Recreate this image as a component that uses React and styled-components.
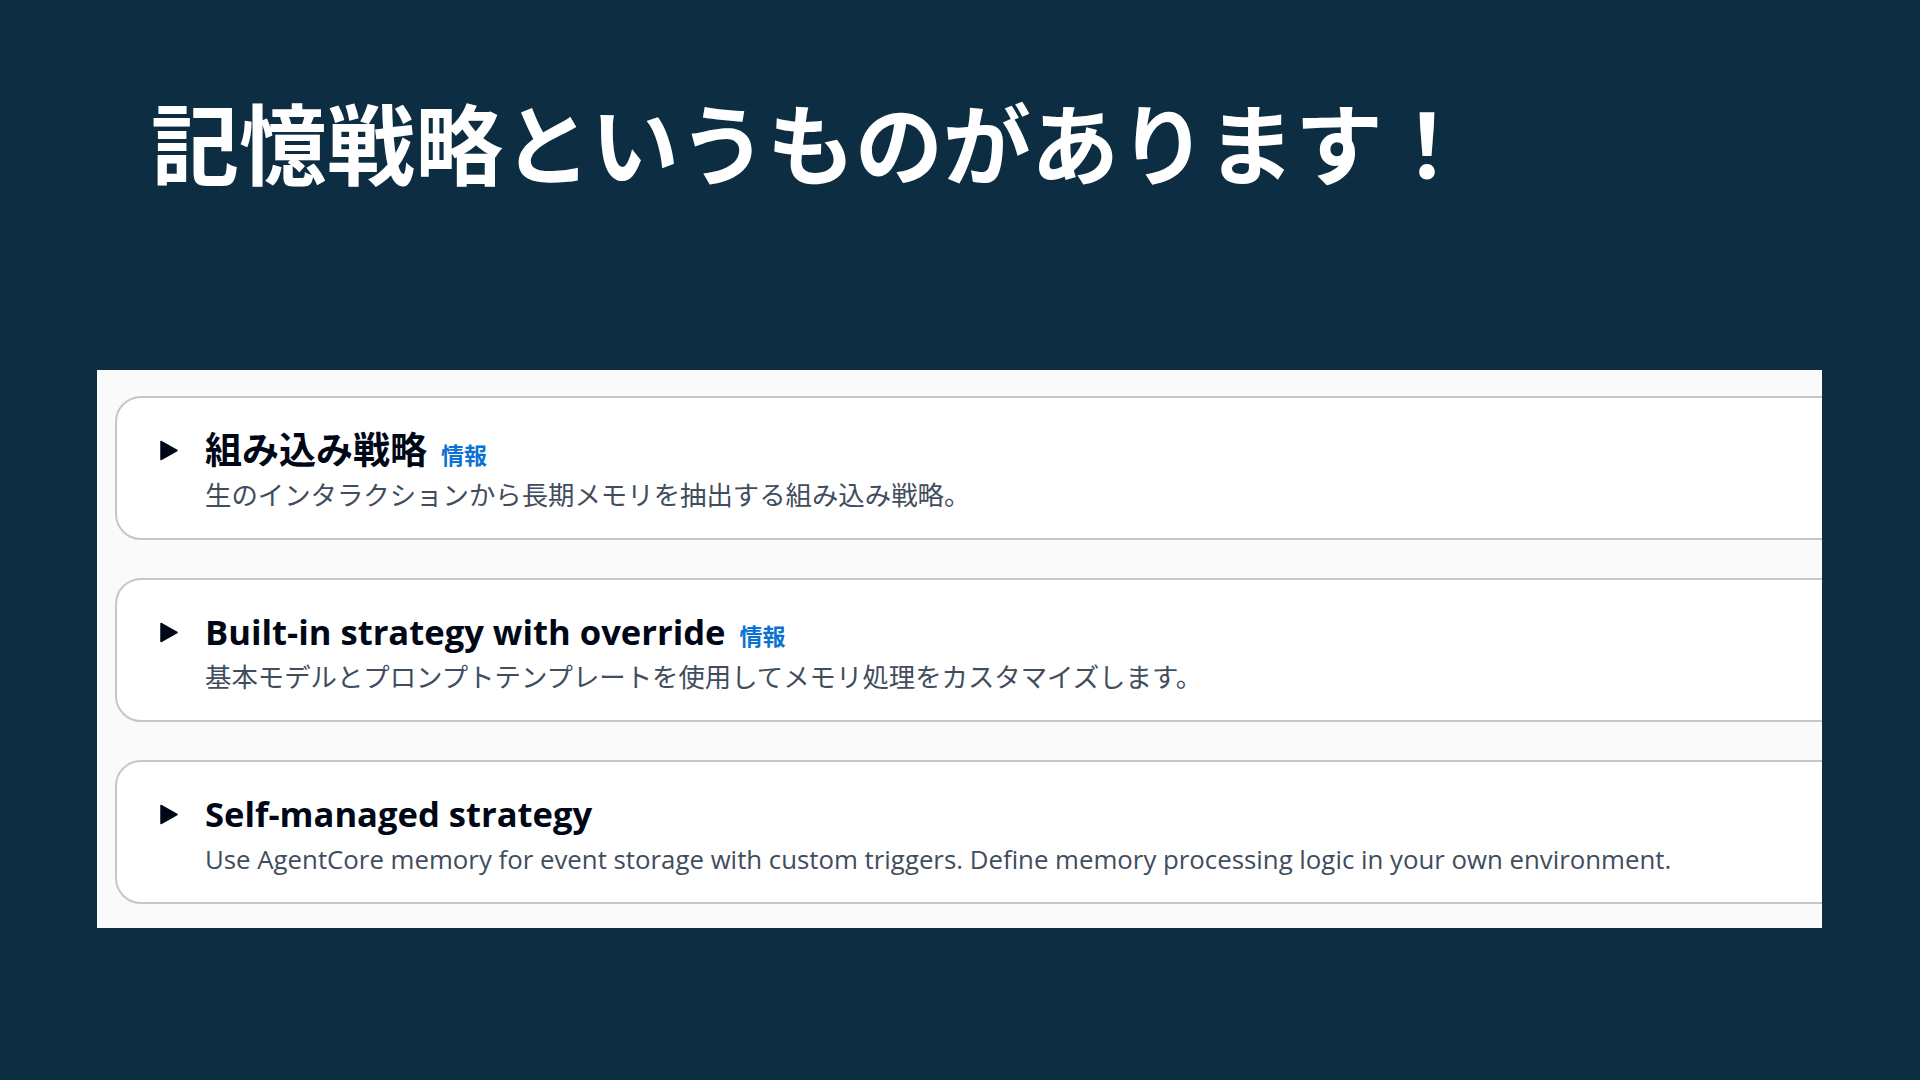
import React from 'react';
import styled, { createGlobalStyle } from 'styled-components';

const GlobalStyle = createGlobalStyle`
  html, body {
    margin: 0;
    padding: 0;
    background: #0d2e42;
  }
  body {
    font-family: "Open Sans", "Noto Sans CJK JP", sans-serif;
  }
`;

const Slide = styled.div`
  width: 1920px;
  height: 1080px;
  box-sizing: border-box;
  padding: 84px 98px 0 97px;
  display: flex;
  flex-direction: column;
  overflow: hidden;
`;

const Title = styled.h1`
  margin: 0 0 0 54px;
  font-family: "Noto Sans CJK JP", sans-serif;
  font-size: 88px;
  line-height: 112px;
  font-weight: 700;
  color: #ffffff;
`;

const Panel = styled.div`
  margin-top: 174px;
  background: #fafafa;
  padding: 26px 0 24px 18px;
  overflow: hidden;
  display: flex;
  flex-direction: column;
  gap: 38px;
`;

const Card = styled.div`
  margin-right: -40px;
  background: #ffffff;
  border: 2px solid #c6c6cd;
  border-radius: 26px;
  padding: 32px 0 27px 43px;
  display: flex;
  align-items: flex-start;
  gap: 27px;
`;

const Toggle = styled.span`
  height: 40px;
  display: flex;
  align-items: center;
  flex: none;
`;

const Body = styled.div`
  display: flex;
  flex-direction: column;
  gap: 9px;
`;

const Heading = styled.div`
  display: flex;
  align-items: baseline;
  gap: 14px;
  height: 40px;
  font-size: ${(p) => (p.$cjk ? '37px' : '34.6px')};
  line-height: 40px;
  font-weight: 700;
  color: #000716;
`;

const Info = styled.a`
  font-size: 23px;
  font-weight: 700;
  color: #0972d3;
  text-decoration: none;
  font-family: "Noto Sans CJK JP", sans-serif;
`;

const Description = styled.div`
  font-size: ${(p) => (p.$cjk ? '26.4px' : '25.8px')};
  line-height: 32px;
  color: #414d5c;
`;

const Caret = () => (
  <svg width="18" height="21" viewBox="0 0 18 21">
    <path d="M1 1.5 L17 10.5 L1 19.5 Z" fill="#000716" stroke="#000716" strokeWidth="1.5" strokeLinejoin="round" />
  </svg>
);

const strategies = [
  {
    title: '組み込み戦略',
    cjkTitle: true,
    cjkText: true,
    info: true,
    text: '生のインタラクションから長期メモリを抽出する組み込み戦略。',
  },
  {
    title: 'Built-in strategy with override',
    cjkTitle: false,
    cjkText: true,
    info: true,
    text: '基本モデルとプロンプトテンプレートを使用してメモリ処理をカスタマイズします。',
  },
  {
    title: 'Self-managed strategy',
    cjkTitle: false,
    cjkText: false,
    info: false,
    text: 'Use AgentCore memory for event storage with custom triggers. Define memory processing logic in your own environment.',
  },
];

export default function App() {
  return (
    <>
      <GlobalStyle />
      <Slide>
        <Title>記憶戦略というものがあります！</Title>
        <Panel>
          {strategies.map((s) => (
            <Card key={s.title}>
              <Toggle>
                <Caret />
              </Toggle>
              <Body>
                <Heading $cjk={s.cjkTitle}>
                  <span>{s.title}</span>
                  {s.info && <Info href="#">情報</Info>}
                </Heading>
                <Description $cjk={s.cjkText}>{s.text}</Description>
              </Body>
            </Card>
          ))}
        </Panel>
      </Slide>
    </>
  );
}
